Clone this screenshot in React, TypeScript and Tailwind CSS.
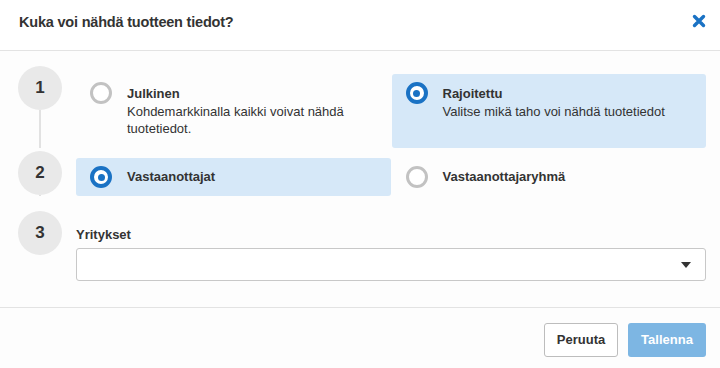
import { useState } from "react";

type StepProps = {
  num: number;
  last?: boolean;
  pb: string;
  children: React.ReactNode;
};

function Step({ num, last, pb, children }: StepProps) {
  return (
    <div className={`flex ${pb}`}>
      <div className="flex w-[76px] shrink-0 flex-col items-center pl-[4px]">
        <div className="flex size-[44px] shrink-0 items-center justify-center rounded-full bg-[#e9e9e9] text-[17px] font-bold text-[#333]">
          {num}
        </div>
        {!last && <div className="w-[2px] flex-1 bg-[#e2e2e2]" />}
      </div>
      <div className="flex-1">{children}</div>
    </div>
  );
}

function Radio({ checked }: { checked: boolean }) {
  return checked ? (
    <span className="flex size-[22px] shrink-0 items-center justify-center rounded-full border-[4px] border-[#1a72c4] bg-white">
      <span className="size-[7px] rounded-full bg-[#1a72c4]" />
    </span>
  ) : (
    <span className="size-[22px] shrink-0 rounded-full border-[3px] border-[#c2c2c2] bg-white" />
  );
}

export default function App() {
  const [scope, setScope] = useState("rajoitettu");
  const [target, setTarget] = useState("vastaanottajat");

  return (
    <div className="flex h-[368px] w-[720px] flex-col bg-[#fdfdfd] font-['Liberation_Sans',Arial,sans-serif] text-[#333]">
      <div className="flex h-[51px] items-start justify-between border-b border-[#e3e3e3] bg-white pl-[19px] pr-[14px] pt-[12px]">
        <h1 className="text-[14.5px] font-bold tracking-[-0.2px]">
          Kuka voi nähdä tuotteen tiedot?
        </h1>
        <button className="mt-[2px] text-[#1a72c4]">
          <svg width="14" height="14" viewBox="0 0 14 14">
            <path
              d="M2.5 2.5 L11.5 11.5 M11.5 2.5 L2.5 11.5"
              stroke="currentColor"
              strokeWidth="3.4"
              strokeLinecap="round"
            />
          </svg>
        </button>
      </div>

      <div className="flex-1 pr-[14px] pt-[15px]">
        <Step num={1} pb="pb-[3px]">
          <div className="mt-[8px] grid grid-cols-2 gap-[1px]">
            <label
              className={`flex h-[74px] cursor-pointer items-start gap-[15px] rounded-[3px] px-[14px] pt-[8px] ${scope === "julkinen" ? "bg-[#d6e8f8]" : ""}`}
              onClick={() => setScope("julkinen")}
            >
              <Radio checked={scope === "julkinen"} />
              <div className="pt-[3px] text-[13px] leading-[17.5px]">
                <div className="font-bold">Julkinen</div>
                <div>Kohdemarkkinalla kaikki voivat nähdä tuotetiedot.</div>
              </div>
            </label>
            <label
              className={`flex h-[74px] cursor-pointer items-start gap-[15px] rounded-[3px] px-[14px] pt-[8px] ${scope === "rajoitettu" ? "bg-[#d6e8f8]" : ""}`}
              onClick={() => setScope("rajoitettu")}
            >
              <Radio checked={scope === "rajoitettu"} />
              <div className="pt-[3px] text-[13px] leading-[17.5px]">
                <div className="font-bold">Rajoitettu</div>
                <div>Valitse mikä taho voi nähdä tuotetiedot</div>
              </div>
            </label>
          </div>
        </Step>

        <Step num={2} pb="pb-[15px]">
          <div className="mt-[7px] grid grid-cols-2 gap-[1px]">
            <label
              className={`flex h-[38px] cursor-pointer items-center gap-[15px] rounded-[3px] px-[14px] ${target === "vastaanottajat" ? "bg-[#d6e8f8]" : ""}`}
              onClick={() => setTarget("vastaanottajat")}
            >
              <Radio checked={target === "vastaanottajat"} />
              <span className="text-[13px] font-bold">Vastaanottajat</span>
            </label>
            <label
              className={`flex h-[38px] cursor-pointer items-center gap-[15px] rounded-[3px] px-[14px] ${target === "ryhma" ? "bg-[#d6e8f8]" : ""}`}
              onClick={() => setTarget("ryhma")}
            >
              <Radio checked={target === "ryhma"} />
              <span className="text-[13px] font-bold">Vastaanottajaryhmä</span>
            </label>
          </div>
        </Step>

        <Step num={3} last pb="pb-[26px]">
          <div className="pt-[16px]">
            <div className="text-[13px] font-bold leading-[15px]">Yritykset</div>
            <div className="mt-[6px] flex h-[33px] items-center justify-end rounded-[3px] border border-[#c8c8c8] bg-white pr-[14px]">
              <svg width="10" height="6" viewBox="0 0 10 6">
                <path d="M0 0 H10 L5 6 Z" fill="#333" />
              </svg>
            </div>
          </div>
        </Step>
      </div>

      <div className="flex h-[61px] items-start justify-end gap-[10px] border-t border-[#e3e3e3] pr-[14px] pt-[15px]">
        <button className="h-[34px] w-[74px] rounded-[3px] border border-[#bdbdbd] bg-white text-[13px] font-bold text-[#333]">
          Peruuta
        </button>
        <button className="h-[34px] w-[78px] rounded-[3px] bg-[#7db6e3] text-[13px] font-bold text-white">
          Tallenna
        </button>
      </div>
    </div>
  );
}
